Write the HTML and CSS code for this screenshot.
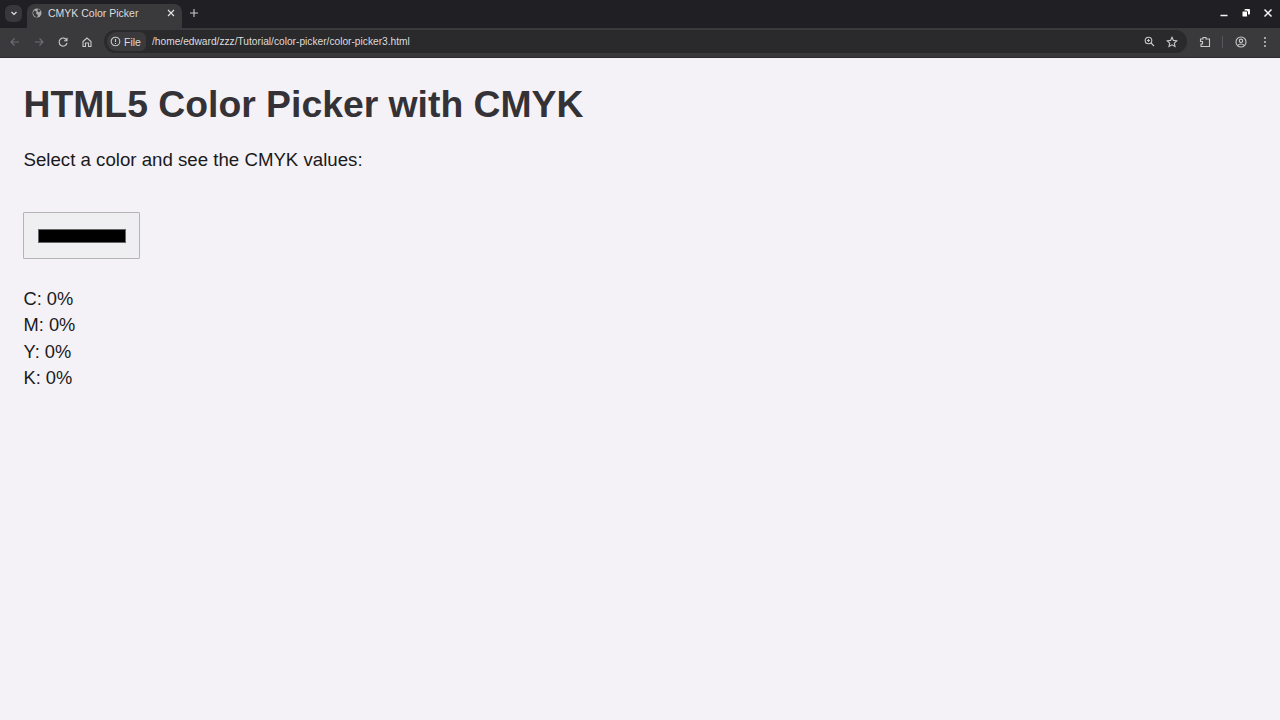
FILE: index.html
```html
<!DOCTYPE html>
<html lang="en">
<head>
<meta charset="utf-8">
<title>CMYK Color Picker</title>
<link rel="stylesheet" href="styles.css">
</head>
<body>
<header class="chrome">
  <div class="tabbar">
    <div class="tab-search"><svg width="10" height="10" viewBox="0 0 10 10"><path d="M2.500 4 5 6.500 7.500 4" class="ic w"/></svg></div>
    <div class="tab">
      <svg class="favicon" width="10" height="10" viewBox="0 0 10 10"><circle cx="5" cy="5" r="4.500" fill="#a9a9ab"/><path d="M2 2.500 4.500 3.500 4 5.500 6 7 5 9.500 2.500 8 1 5ZM6 1l2.500 1.500L7 4.500 5.500 3Z" fill="#3a393c"/></svg>
      <span class="tab-title">CMYK Color Picker</span>
      <svg class="tab-close" width="8" height="8" viewBox="0 0 8 8"><path d="M1 1 7 7M7 1 1 7" class="ic w"/></svg>
    </div>
    <svg class="newtab" width="10" height="10" viewBox="0 0 10 10"><path d="M5 1V9M1 5H9" class="ic"/></svg>
    <div class="spacer"></div>
    <div class="winctl">
      <svg width="10" height="10" viewBox="0 0 10 10"><path d="M1.500 7.500H8.500" class="ic w2"/></svg>
      <svg width="10" height="10" viewBox="0 0 10 10"><rect x="3.500" y="1" width="5.500" height="5.500" rx="1" fill="#fff"/><rect x="1" y="3" width="5.500" height="6" rx="1" fill="#fff" stroke="#201f23"/></svg>
      <svg width="10" height="10" viewBox="0 0 10 10"><path d="M1.500 1.500 8.500 8.500M8.500 1.500 1.500 8.500" class="ic w2"/></svg>
    </div>
  </div>
  <div class="toolbar">
    <svg class="nav" width="12" height="12" viewBox="0 0 12 12"><path d="M10 6H2M5.500 2.500 2 6l3.500 3.500" class="ic dim"/></svg>
    <svg class="nav" width="12" height="12" viewBox="0 0 12 12"><path d="M2 6H10M6.500 2.500 10 6 6.500 9.500" class="ic dim"/></svg>
    <svg class="nav" width="12" height="12" viewBox="0 0 12 12"><path d="M9.800 4.500A4 4 0 1 0 10 7M10 1.800V4.700H7.100" class="ic"/></svg>
    <svg class="nav" width="12" height="12" viewBox="0 0 12 12"><path d="M2 5.500 6 2l4 3.500V10.500H7.500V7h-3v3.500H2Z" class="ic"/></svg>
    <div class="omnibox">
      <div class="chip">
        <svg width="11" height="11" viewBox="0 0 11 11"><circle cx="5.500" cy="5.500" r="4.300" class="ic"/><path d="M5.500 3V6M5.500 7V8" class="ic"/></svg>
        <span>File</span>
      </div>
      <span class="url">/home/edward/zzz/Tutorial/color-picker/color-picker3.html</span>
      <div class="spacer"></div>
      <svg class="omni-ic" width="11" height="11" viewBox="0 0 11 11"><circle cx="4.500" cy="4.500" r="3.300" class="ic"/><path d="M7 7 10 10M3 4.500H6M4.500 3V6" class="ic"/></svg>
      <svg class="omni-ic" width="12" height="12" viewBox="0 0 12 12"><path d="M6 1.300 7.400 4.400 10.800 4.800 8.300 7.100 9 10.500 6 8.800 3 10.500 3.700 7.100 1.200 4.800 4.600 4.400Z" class="ic"/></svg>
    </div>
    <svg class="ext" width="12" height="12" viewBox="0 0 12 12"><path d="M1.500 3H4V1.500H7V3H10.500V10.500H2V8H3.500V5.500H1.500Z" class="ic"/></svg>
    <div class="divider"></div>
    <svg class="profile" width="12" height="12" viewBox="0 0 12 12"><circle cx="6" cy="6" r="5" class="ic"/><circle cx="6" cy="4.800" r="1.700" class="ic"/><path d="M2.800 9.500C4 7.500 8 7.500 9.200 9.500" class="ic"/></svg>
    <svg class="menu" width="4" height="12" viewBox="0 0 4 12"><circle cx="2" cy="2" r="1" fill="#c9c9cb"/><circle cx="2" cy="6" r="1" fill="#c9c9cb"/><circle cx="2" cy="10" r="1" fill="#c9c9cb"/></svg>
  </div>
</header>
<main class="page">
  <h1>HTML5 Color Picker with CMYK</h1>
  <p class="intro">Select a color and see the CMYK values:</p>
  <div class="swatch-btn"><div class="swatch"></div></div>
  <div class="values">
    <div>C: 0%</div>
    <div>M: 0%</div>
    <div>Y: 0%</div>
    <div>K: 0%</div>
  </div>
</main>
</body>
</html>
```
FILE: styles.css
```css
* { box-sizing: border-box; }
html, body { margin: 0; height: 100%; }
body {
  display: flex;
  flex-direction: column;
  height: 720px;
  overflow: hidden;
  background: #f4f2f6;
  font-family: "Liberation Sans", Arial, sans-serif;
}
.chrome { flex: none; }
.tabbar {
  height: 28px;
  background: #201f23;
  display: flex;
  align-items: center;
  padding-left: 5px;
  padding-bottom: 2px;
}
.tab-search {
  width: 17px;
  height: 17px;
  border-radius: 6px;
  background: #38373b;
  display: flex;
  align-items: center;
  justify-content: center;
}
.tab {
  margin-left: 5px;
  align-self: flex-end;
  margin-bottom: -2px;
  width: 155px;
  height: 24px;
  background: #3a393c;
  border-radius: 8px 8px 0 0;
  display: flex;
  align-items: center;
  padding: 0 7px 6px 5px;
}
.favicon { flex: none; }
.tab-title {
  margin-left: 6px;
  flex: 1;
  font-size: 10.500px;
  color: #dcdcde;
  white-space: nowrap;
}
.newtab { margin-left: 7px; }
.spacer { flex: 1; }
.winctl {
  display: flex;
  gap: 12px;
  padding-right: 7px;
}
.ic { fill: none; stroke: #c9c9cb; stroke-width: 1.100; }
.ic.w { stroke: #e6e6e8; }
.ic.w2 { stroke: #f4f4f4; stroke-width: 1.500; }
.ic.dim { stroke: #706f73; }
.toolbar {
  height: 30px;
  background: #3a393c;
  display: flex;
  align-items: center;
  padding: 0 0 2px 9px;
  border-bottom: 1px solid #2c2b2e;
}
.nav { margin-right: 12px; flex: none; }
.omnibox {
  margin-left: -1px;
  width: 1083px;
  height: 23px;
  border-radius: 12px;
  background: #2a292c;
  display: flex;
  align-items: center;
  padding: 0 9px 0 3px;
}
.chip {
  height: 19px;
  width: 39px;
  border-radius: 10px 6px 6px 10px;
  background: #3a393c;
  display: flex;
  align-items: center;
  gap: 3px;
  padding-left: 3px;
  font-size: 10.500px;
  color: #dcdcde;
}
.url {
  margin-left: 6px;
  font-size: 10.200px;
  color: #dcdcde;
  white-space: nowrap;
}
.omni-ic { margin-left: 11px; }
.ext { margin-left: 12px; flex: none; }
.divider { width: 1px; height: 12px; background: #56555a; margin-left: 11px; }
.profile { margin-left: 12px; flex: none; }
.menu { margin-left: 16px; flex: none; }
.page {
  flex: 1;
  padding: 0 23.500px;
  color: #000;
}
h1 {
  margin: 25px 0 0;
  font-size: 37.330px;
  line-height: 42px;
  font-weight: 700;
  color: #343236;
}
.intro {
  margin: 22px 0 0;
  font-size: 18.670px;
  line-height: 26px;
  color: #1a1a1c;
}
.swatch-btn {
  margin-top: 39px;
  margin-left: -0.500px;
  width: 117px;
  height: 47px;
  border: 1px solid #b4b3b6;
  border-radius: 1px;
  background: #efeef0;
  display: flex;
  align-items: center;
  justify-content: center;
}
.swatch { width: 88px; height: 14px; background: #000; border: 1px solid #666; }
.values {
  margin-top: 27px;
  font-size: 18.300px;
  line-height: 26.400px;
  color: #1a1a1c;
}
```
